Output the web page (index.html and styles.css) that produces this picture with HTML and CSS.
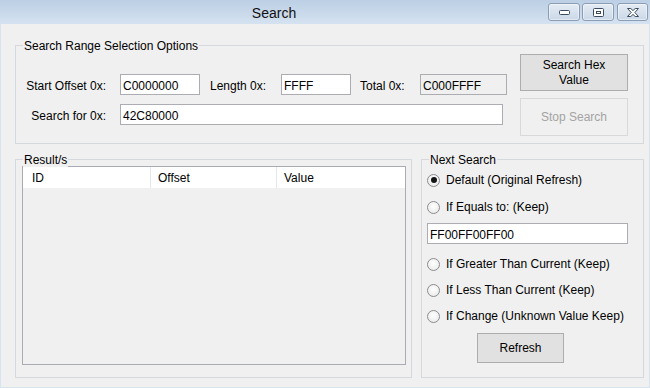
FILE: index.html
```html
<!DOCTYPE html>
<html lang="en">

<head>
    <meta charset="UTF-8">
    <meta name="viewport" content="width=device-width, initial-scale=1.0">
    <title>Search</title>
    <link rel="stylesheet" href="styles.css">
</head>

<body>
    <div class="window">
        <div class="titlebar">
            <div class="title">Search</div>
            <div class="caption-buttons">
                <div class="cap">
                    <svg width="11" height="5" viewBox="0 0 11 5">
                        <rect x="0.5" y="0.5" width="10" height="4" rx="1" fill="#fff" stroke="#3b4b60" />
                    </svg>
                </div>
                <div class="cap">
                    <svg width="11" height="9" viewBox="0 0 11 9">
                        <rect x="0.5" y="0.5" width="10" height="8" rx="1" fill="#fff" stroke="#3b4b60" />
                        <rect x="3.5" y="3.5" width="4" height="2" fill="#fff" stroke="#3b4b60" />
                    </svg>
                </div>
                <div class="cap cap-close">
                    <svg width="12" height="9" viewBox="0 0 12 9">
                        <path d="M0.5 0.5H3.8L6 2.6L8.2 0.5H11.5L7.8 4.5L11.5 8.5H8.2L6 6.4L3.8 8.5H0.5L4.2 4.5Z"
                            fill="#fff" stroke="#3b4b60" stroke-linejoin="round" />
                    </svg>
                </div>
            </div>
        </div>

        <div class="client">
            <div class="group range">
                <span class="group-title">Search Range Selection Options</span>

                <div class="fields">
                    <div class="field-row">
                        <label class="lbl-main">Start Offset 0x:</label>
                        <input class="txt w-start" type="text" value="C0000000">
                        <label class="lbl lbl-length">Length 0x:</label>
                        <input class="txt w-length" type="text" value="FFFF">
                        <label class="lbl lbl-total">Total 0x:</label>
                        <input class="txt w-total" type="text" value="C000FFFF" readonly>
                    </div>
                    <div class="field-row row-search">
                        <label class="lbl-main">Search for 0x:</label>
                        <input class="txt w-search" type="text" value="42C80000">
                    </div>
                </div>

                <div class="actions">
                    <button class="btn btn-hex">Search Hex<br>Value</button>
                    <button class="btn btn-stop" disabled>Stop Search</button>
                </div>
            </div>

            <div class="lower">
                <div class="group results">
                    <span class="group-title">Result/s</span>
                    <div class="listview">
                        <div class="lv-header">
                            <div class="col col-id">ID</div>
                            <div class="col col-offset">Offset</div>
                            <div class="col col-value">Value</div>
                        </div>
                    </div>
                </div>

                <div class="group next">
                    <span class="group-title">Next Search</span>

                    <div class="opt opt-1"><span class="radio checked"></span>Default (Original Refresh)</div>
                    <div class="opt opt-2"><span class="radio"></span>If Equals to: (Keep)</div>
                    <input class="txt w-equals" type="text" value="FF00FF00FF00">
                    <div class="opt opt-3"><span class="radio"></span>If Greater Than Current (Keep)</div>
                    <div class="opt opt-4"><span class="radio"></span>If Less Than Current (Keep)</div>
                    <div class="opt opt-5"><span class="radio"></span>If Change (Unknown Value Keep)</div>

                    <button class="btn btn-refresh">Refresh</button>
                </div>
            </div>
        </div>
    </div>
</body>

</html>
```

FILE: styles.css
```css
* {
    margin: 0;
    padding: 0;
    box-sizing: border-box;
}

body {
    font-family: "Liberation Sans", Arial, sans-serif;
    font-size: 12px;
    color: #000;
    background: #fff;
}

.window {
    width: 650px;
    height: 388px;
    display: flex;
    flex-direction: column;
    overflow: hidden;
}

/* title bar */

.titlebar {
    height: 24px;
    display: flex;
    background: linear-gradient(#bccfe4, #d5e2f0);
}

.title {
    width: 548px;
    text-align: center;
    font-size: 14px;
    line-height: 26px;
    color: #111;
}

.caption-buttons {
    display: flex;
    gap: 2px;
    padding-top: 3px;
}

.cap {
    width: 32px;
    height: 18px;
    border: 1px solid #8b9db5;
    border-radius: 3px;
    background: linear-gradient(#e4ecf5, #cbd8e7);
    box-shadow: inset 0 0 0 1px rgba(255, 255, 255, 0.45);
    display: flex;
    align-items: center;
    justify-content: center;
}

.cap-close {
    width: 31px;
    margin-left: 1px;
}

/* client area */

.client {
    flex: 1;
    background: #f0f0f0;
    border: 1px solid #d6e3f1;
    border-top: none;
    padding: 21px 5px 0 14px;
}

.group {
    position: relative;
    border: 1px solid #d5d9dd;
}

.group-title {
    position: absolute;
    top: -7px;
    left: 7px;
    padding: 0 1px;
    line-height: 14px;
    background: #f0f0f0;
    white-space: nowrap;
}

.range {
    width: 629px;
    height: 99px;
    display: flex;
    padding: 8px 15px 0 10px;
}

.fields {
    flex: 1;
    padding-top: 20px;
}

.field-row {
    display: flex;
    align-items: center;
    height: 21px;
}

.row-search {
    margin-top: 9px;
}

.field-row label {
    flex-shrink: 0;
    white-space: nowrap;
    padding-top: 2px;
}

.lbl-main {
    width: 94px;
    padding-right: 14px;
    text-align: right;
}

.lbl-length {
    width: 71px;
    margin-left: 10px;
}

.lbl-total {
    width: 60px;
    margin-left: 9px;
}

.txt {
    flex-shrink: 0;
    height: 21px;
    border: 1px solid #abadb3;
    background: #fff;
    font-family: "Liberation Sans", Arial, sans-serif;
    font-size: 12px;
    color: #000;
    padding: 2px 2px 0;
    outline: none;
}

.txt[readonly] {
    background: #f0f0f0;
}

.w-start {
    width: 80px;
}

.w-length {
    width: 70px;
}

.w-total {
    width: 87px;
}

.w-search {
    width: 383px;
}

.actions {
    width: 108px;
    display: flex;
    flex-direction: column;
    gap: 7px;
}

.btn {
    font-family: "Liberation Sans", Arial, sans-serif;
    font-size: 12px;
    line-height: 15px;
    color: #000;
    border: 1px solid #adadad;
    background: #e1e1e1;
    padding-top: 1px;
}

.btn-hex {
    height: 37px;
}

.btn-stop {
    height: 38px;
    border-color: #d9d9d9;
    background: #f0f0f0;
    color: #a3a3a3;
}

/* lower groups */

.lower {
    display: flex;
    gap: 9px;
    margin-top: 15px;
    height: 219px;
}

.results {
    width: 397px;
    padding: 6px 5px 12px 6px;
}

.listview {
    height: 100%;
    border: 1px solid #a9acb2;
    background: #f0f0f0;
}

.lv-header {
    display: flex;
    height: 21px;
    background: #fff;
    line-height: 22px;
}

.col {
    border-right: 1px solid #e3e8ee;
    padding-left: 7px;
}

.col-id {
    width: 128px;
    padding-left: 9px;
}

.col-offset {
    width: 126px;
}

.col-value {
    flex: 1;
    border-right: none;
}

.next {
    width: 223px;
    padding-left: 5px;
    display: flex;
    flex-direction: column;
}

.opt {
    display: flex;
    align-items: center;
    height: 16px;
    white-space: nowrap;
}

.radio {
    flex-shrink: 0;
    width: 13px;
    height: 13px;
    border: 1px solid #8a8c8f;
    border-radius: 50%;
    background: radial-gradient(circle at 50% 40%, #ffffff, #e6e6e6);
    margin-right: 6px;
    display: flex;
    align-items: center;
    justify-content: center;
}

.radio.checked::after {
    content: "";
    width: 6px;
    height: 6px;
    border-radius: 50%;
    background: #141414;
}

.opt-1 {
    margin-top: 12px;
}

.opt-2 {
    margin-top: 11px;
}

.w-equals {
    width: 201px;
    margin-top: 8px;
}

.opt-3 {
    margin-top: 12px;
}

.opt-4,
.opt-5 {
    margin-top: 10px;
}

.btn-refresh {
    width: 87px;
    height: 30px;
    margin-top: 9px;
    margin-left: 50px;
}
```
